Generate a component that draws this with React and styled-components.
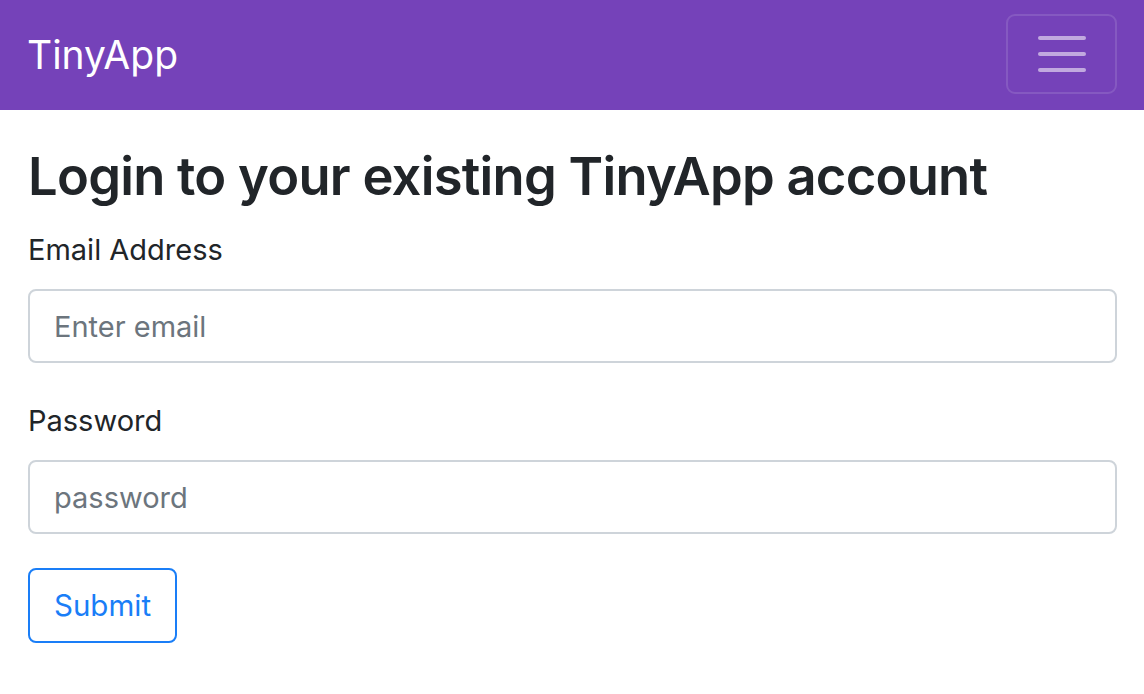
import React from "react";
import styled, { createGlobalStyle } from "styled-components";

const Global = createGlobalStyle`
  * { box-sizing: border-box; }
  body {
    margin: 0;
    background: #fff;
    font-family: Inter, "Noto Sans", "Liberation Sans", sans-serif;
    color: #212529;
  }
`;

const Navbar = styled.nav`
  height: 110px;
  background: #7542b9;
  display: flex;
  align-items: center;
  justify-content: space-between;
  padding: 0 27px 0 28px;
`;

const Brand = styled.a`
  color: #fff;
  font-size: 39px;
  font-weight: 400;
  line-height: 1.5;
  text-decoration: none;
  margin-left: -1px;
`;

const Toggler = styled.button`
  width: 111px;
  height: 80px;
  margin-top: -2px;
  border: 2px solid rgba(255, 255, 255, 0.12);
  border-radius: 9px;
  background: transparent;
  display: flex;
  flex-direction: column;
  align-items: center;
  justify-content: center;
  gap: 12px;
  padding: 0;
`;

const Bar = styled.span`
  display: block;
  width: 48px;
  height: 4px;
  border-radius: 2px;
  background: rgba(255, 255, 255, 0.55);
`;

const Main = styled.main`
  padding: 33px 27px 0 28px;
`;

const Title = styled.h2`
  margin: 0 0 17px;
  font-size: 52.5px;
  font-weight: 600;
  line-height: 66px;
  letter-spacing: -0.75px;
`;

const Group = styled.div`
  margin-bottom: 34px;
`;

const Label = styled.label`
  display: block;
  font-size: 29px;
  line-height: 42px;
  padding-top: 3px;
  margin-bottom: 18px;
`;

const Input = styled.input`
  display: block;
  width: 100%;
  height: 74px;
  border: 2px solid #ced4da;
  border-radius: 8px;
  padding: 0 24px;
  font-family: inherit;
  font-size: 29px;
  color: #495057;
  background: #fff;
  outline: none;
  &::placeholder {
    color: #6c757d;
    opacity: 1;
  }
`;

const Button = styled.button`
  height: 75px;
  padding: 0 24px;
  border: 2px solid #1a7ef7;
  border-radius: 8px;
  background: #fff;
  color: #1a7ef7;
  font-family: inherit;
  font-size: 29.5px;
  line-height: 1.5;
`;

export default function App() {
  return (
    <>
      <Global />
      <Navbar>
        <Brand href="#">TinyApp</Brand>
        <Toggler aria-label="Toggle navigation">
          <Bar />
          <Bar />
          <Bar />
        </Toggler>
      </Navbar>
      <Main>
        <Title>Login to your existing TinyApp account</Title>
        <form onSubmit={(e) => e.preventDefault()}>
          <Group>
            <Label htmlFor="email">Email Address</Label>
            <Input id="email" type="email" placeholder="Enter email" />
          </Group>
          <Group>
            <Label htmlFor="password">Password</Label>
            <Input id="password" type="password" placeholder="password" />
          </Group>
          <Button type="submit">Submit</Button>
        </form>
      </Main>
    </>
  );
}
